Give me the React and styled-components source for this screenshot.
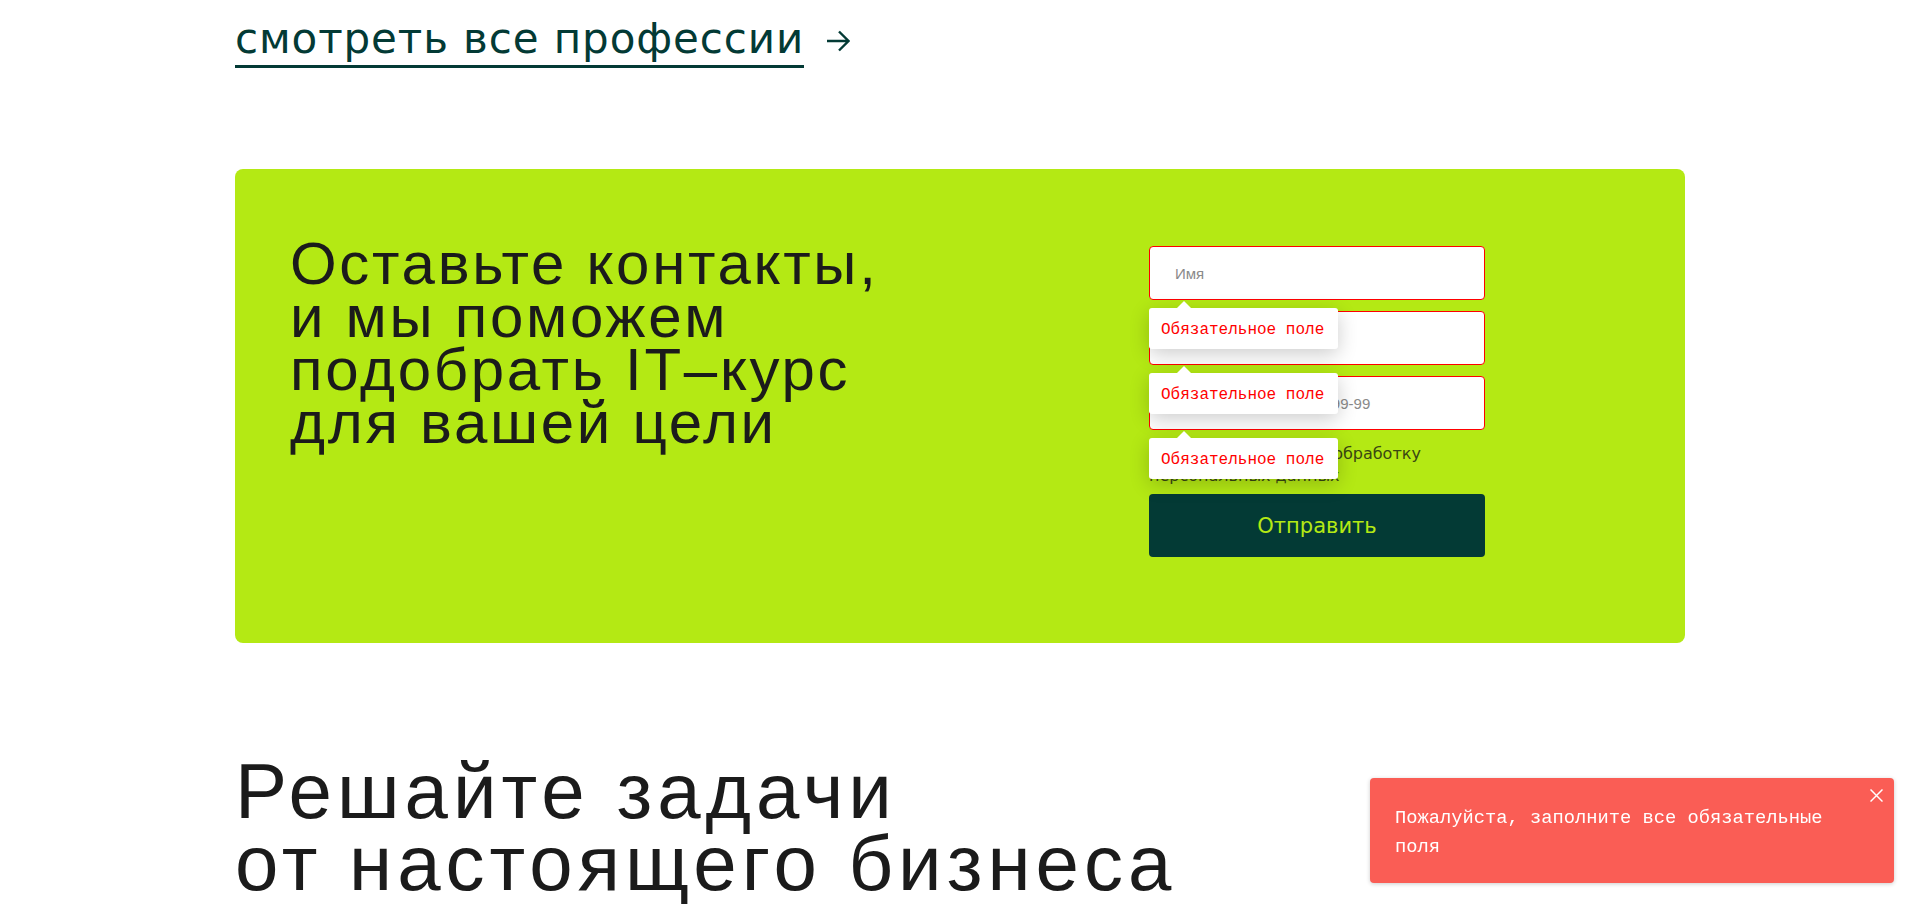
import React from 'react';
import styled, { createGlobalStyle } from 'styled-components';

const GlobalStyle = createGlobalStyle`
  body {
    margin: 0;
    background: #ffffff;
  }
  * {
    box-sizing: border-box;
  }
`;

const Page = styled.main`
  width: 1450px;
  margin: 0 auto;
  padding-top: 14px;
  padding-bottom: 80px;
`;

const MoreLink = styled.a`
  display: inline-flex;
  align-items: center;
  gap: 23px;
  color: #033a35;
  text-decoration: none;
`;

const MoreText = styled.span`
  font-family: 'DejaVu Sans', sans-serif;
  font-size: 42px;
  letter-spacing: 0.9px;
  line-height: normal;
  padding-bottom: 2px;
  border-bottom: 3px solid #033a35;
`;

const ContactCard = styled.section`
  margin-top: 101px;
  height: 474px;
  background: #b4e914;
  border-radius: 8px;
  display: flex;
  justify-content: space-between;
  align-items: flex-start;
  padding: 68px 200px 0 55px;
`;

const CardTitle = styled.h2`
  margin: 0;
  font-family: 'Liberation Sans', Arial, sans-serif;
  font-weight: 400;
  font-size: 60px;
  line-height: 53px;
  letter-spacing: 2.7px;
  color: #1b1b1b;
`;

const Form = styled.form`
  width: 336px;
  margin-top: 9px;
  display: flex;
  flex-direction: column;
`;

const Fields = styled.div`
  display: flex;
  flex-direction: column;
  gap: 11px;
`;

const Field = styled.div`
  position: relative;
`;

const Input = styled.input`
  width: 100%;
  height: 54px;
  padding: 0 25px;
  border: 1px solid #ff0000;
  border-radius: 4px;
  background: #ffffff;
  font-family: 'Liberation Sans', Arial, sans-serif;
  font-size: 15px;
  color: #1b1b1b;
  outline: none;

  &::placeholder {
    color: #8a8a8a;
  }
`;

const ErrorTip = styled.div`
  position: absolute;
  top: calc(100% + 8px);
  left: 0;
  z-index: 2;
  padding: 13px 14px 9px 12px;
  background: #ffffff;
  border-radius: 3px;
  box-shadow: 0 5px 20px rgba(0, 0, 0, 0.2);
  font-family: 'Liberation Mono', monospace;
  font-size: 16px;
  line-height: 19px;
  color: #ff0000;
  white-space: nowrap;

  &::before {
    content: '';
    position: absolute;
    top: -7px;
    left: 28px;
    border-left: 7px solid transparent;
    border-right: 7px solid transparent;
    border-bottom: 7px solid #ffffff;
  }
`;

const Consent = styled.label`
  margin-top: 13px;
  font-family: 'DejaVu Sans', sans-serif;
  font-size: 16px;
  line-height: 22px;
  color: #3a4712;
`;

const CheckBox = styled.span`
  display: inline-block;
  width: 16px;
  height: 16px;
  margin-right: 6px;
  vertical-align: -2px;
  border: 1px solid #033a35;
  border-radius: 3px;
  background: #ffffff;
`;

const SubmitButton = styled.button`
  margin-top: 7px;
  width: 100%;
  height: 63px;
  border: none;
  border-radius: 4px;
  background: #033a35;
  color: #b4e914;
  font-family: 'DejaVu Sans', sans-serif;
  font-size: 21px;
  cursor: pointer;
`;

const SectionTitle = styled.h2`
  margin: 112px 0 0;
  font-family: 'Liberation Sans', Arial, sans-serif;
  font-weight: 400;
  font-size: 78px;
  line-height: 72px;
  letter-spacing: 5px;
  color: #1b1b1b;
`;

const Toast = styled.div`
  position: fixed;
  right: 26px;
  bottom: 21px;
  width: 524px;
  padding: 26px 40px 21px 25px;
  background: #fa5d55;
  border-radius: 4px;
  box-shadow: 0 1px 4px rgba(0, 0, 0, 0.2);
  font-family: 'Liberation Mono', monospace;
  font-size: 18.75px;
  line-height: 29px;
  color: #ffffff;
`;

const CloseButton = styled.button`
  position: absolute;
  top: 11px;
  right: 11px;
  width: 13px;
  height: 13px;
  padding: 0;
  border: none;
  background: none;
  display: flex;
  cursor: pointer;
`;

const ArrowIcon = () => (
  <svg width="23" height="22" viewBox="0 0 23 22" fill="none">
    <path d="M0 11H21.5M12 1.5L21.5 11L12 20.5" stroke="#033a35" strokeWidth="2.4" />
  </svg>
);

const CloseIcon = () => (
  <svg width="13" height="13" viewBox="0 0 13 13" fill="none">
    <path d="M0.5 0.5L12.5 12.5M12.5 0.5L0.5 12.5" stroke="#ffffff" strokeWidth="1.5" />
  </svg>
);

const fields = [
  { name: 'name', placeholder: 'Имя' },
  { name: 'email', placeholder: 'Email' },
  { name: 'phone', placeholder: 'Телефон +7 (999) 999-99-99' },
];

const App = () => {
  return (
    <>
      <GlobalStyle />
      <Page>
        <MoreLink href="#">
          <MoreText>смотреть все профессии</MoreText>
          <ArrowIcon />
        </MoreLink>

        <ContactCard>
          <CardTitle>
            Оставьте контакты,
            <br />
            и мы поможем
            <br />
            подобрать IT–курс
            <br />
            для вашей цели
          </CardTitle>

          <Form onSubmit={(e) => e.preventDefault()}>
            <Fields>
              {fields.map((field) => (
                <Field key={field.name}>
                  <Input name={field.name} placeholder={field.placeholder} />
                  <ErrorTip>Обязательное поле</ErrorTip>
                </Field>
              ))}
            </Fields>
            <Consent>
              <CheckBox />
              Я даю согласие на обработку персональных данных
            </Consent>
            <SubmitButton type="submit">Отправить</SubmitButton>
          </Form>
        </ContactCard>

        <SectionTitle>
          Решайте задачи
          <br />
          от настоящего бизнеса
        </SectionTitle>
      </Page>

      <Toast>
        Пожалуйста, заполните все обязательные поля
        <CloseButton aria-label="Закрыть">
          <CloseIcon />
        </CloseButton>
      </Toast>
    </>
  );
};

export default App;
